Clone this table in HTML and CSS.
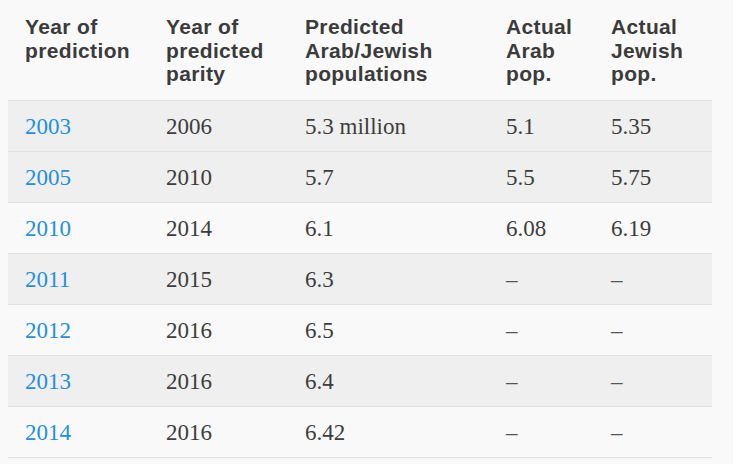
FILE: index.html
```html
<!DOCTYPE html>
<html lang="en">
<head>
<meta charset="utf-8">
<title>Population parity predictions</title>
<link rel="stylesheet" href="styles.css">
</head>
<body>
<table class="data">
  <colgroup>
    <col class="c1"><col class="c2"><col class="c3"><col class="c4"><col class="c5">
  </colgroup>
  <thead>
    <tr>
      <th>Year of<br>prediction</th>
      <th>Year of<br>predicted<br>parity</th>
      <th>Predicted<br>Arab/Jewish<br>populations</th>
      <th>Actual<br>Arab<br>pop.</th>
      <th>Actual<br>Jewish<br>pop.</th>
    </tr>
  </thead>
  <tbody>
    <tr class="shade"><td><a href="#">2003</a></td><td>2006</td><td>5.3 million</td><td>5.1</td><td>5.35</td></tr>
    <tr class="shade"><td><a href="#">2005</a></td><td>2010</td><td>5.7</td><td>5.5</td><td>5.75</td></tr>
    <tr><td><a href="#">2010</a></td><td>2014</td><td>6.1</td><td>6.08</td><td>6.19</td></tr>
    <tr class="shade"><td><a href="#">2011</a></td><td>2015</td><td>6.3</td><td class="dash">–</td><td class="dash">–</td></tr>
    <tr><td><a href="#">2012</a></td><td>2016</td><td>6.5</td><td class="dash">–</td><td class="dash">–</td></tr>
    <tr class="shade"><td><a href="#">2013</a></td><td>2016</td><td>6.4</td><td class="dash">–</td><td class="dash">–</td></tr>
    <tr><td><a href="#">2014</a></td><td>2016</td><td>6.42</td><td class="dash">–</td><td class="dash">–</td></tr>
  </tbody>
</table>
</body>
</html>
```

FILE: styles.css
```css
html, body {
  background: #f9f9f9;
}
body {
  margin: 8px;
}
.data {
  width: 704px;
  border-collapse: collapse;
  table-layout: fixed;
}
.c1 { width: 141px; }
.c2 { width: 139px; }
.c3 { width: 201px; }
.c4 { width: 105px; }
.c5 { width: 118px; }
.data th {
  font-family: "Liberation Sans", Arial, sans-serif;
  font-weight: bold;
  font-size: 21px;
  line-height: 23.5px;
  letter-spacing: 0.35px;
  color: #3b3b3b;
  text-align: left;
  vertical-align: top;
  padding: 7px 4px 14.5px 17px;
  border-bottom: 1px solid #e0e0e0;
}
.data td {
  font-family: "Liberation Serif", "Times New Roman", serif;
  font-size: 23px;
  line-height: 26px;
  color: #3d3d3d;
  padding: 13px 8px 11px 17px;
  border-bottom: 1px solid #e0e0e0;
  white-space: nowrap;
}
.data tr.shade td {
  background: #efefef;
}
.data a {
  color: #2590db;
  text-decoration: none;
}
.data td.dash {
  color: #555;
}
```
